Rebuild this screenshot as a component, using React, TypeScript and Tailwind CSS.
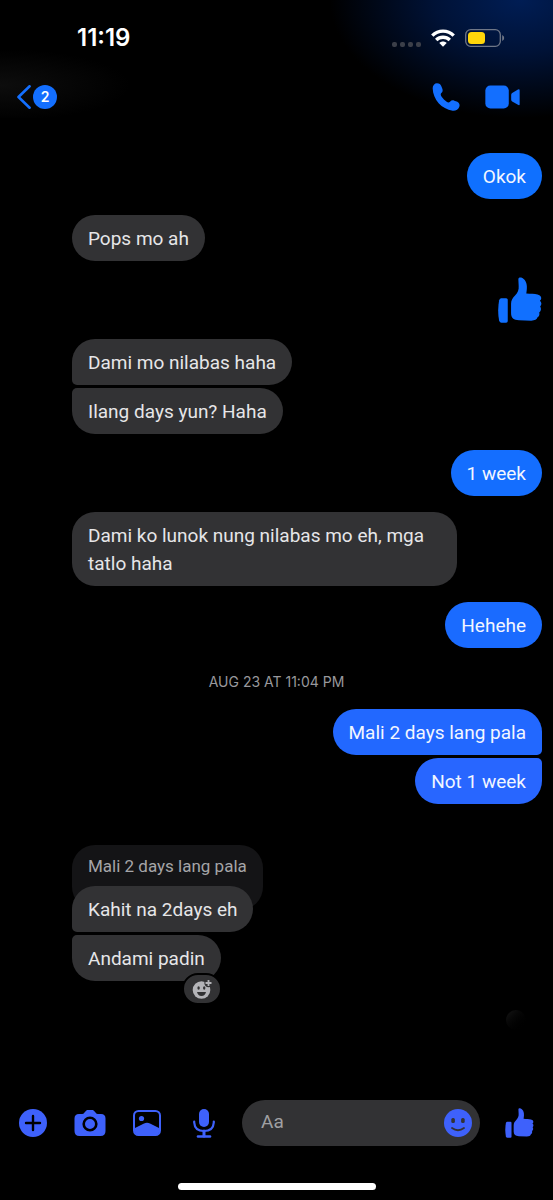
import React from "react";
import clsx from "clsx";

type IconProps = { className?: string };

const ThumbIcon = ({ className }: IconProps) => (
  <svg viewBox="172 411 132 139" fill="currentColor" className={className}>
    <path d="M181 475h15q5 0 5 5v64q0 5-5 5h-14q-5 0-7-6-3-16-3-31t3-31q2-6 6-6z" />
    <path d="M233 418C233 411 242 411 249 417C259 425 261 440 257 461C270 462 282 462 291 464C300 466 303 471 302 477Q301 481 298 483C304 487 304 495 299 500C303 506 302 514 296 518C298 524 296 530 291 533C289 540 283 543 272 543L235 542C219 541 211 535 211 520L211 492C211 480 216 475 223 467C231 458 235 450 234 438Z" />
  </svg>
);

const PhoneIcon = ({ className }: IconProps) => (
  <svg viewBox="186 250 84 84" fill="currentColor" className={className}>
    <path d="M188 266C188 257 194 251 201 251C208 251 212 254 214 260L217 267C219 273 218 276 214 280C211 283 212 287 215 291C219 297 224 302 230 306C234 309 237 309 240 306C244 302 248 301 253 303L262 306C268 309 270 315 268 321C265 329 257 334 248 333C215 329 189 300 188 266Z" />
  </svg>
);

const VideoIcon = ({ className }: IconProps) => (
  <svg viewBox="347 257 103 70" fill="currentColor" className={className}>
    <rect x="348" y="258" width="69" height="68" rx="15" />
    <path d="M424 286q0-4 3-6l17-10q5-3 5 3v40q0 5-5 2l-17-10q-3-2-3-6z" />
  </svg>
);

const WifiIcon = () => (
  <svg viewBox="0 0 24 18" fill="none" stroke="#fff" strokeWidth="3.4" className="h-[18px] w-6">
    <path d="M1.3 6.6C7.3.6 16.7.6 22.7 6.6" />
    <path d="M5.2 11C9 7.4 15 7.4 18.8 11" />
    <path d="M8.3 14C10.3 12 13.7 12 15.7 14L12 17.7Z" fill="#fff" stroke="none" />
  </svg>
);

const BatteryIcon = () => (
  <svg viewBox="0 0 40 18" className="h-[18px] w-10">
    <rect x=".7" y=".7" width="34.6" height="16.6" rx="5" fill="none" stroke="#6f7787" strokeWidth="1.3" />
    <rect x="3" y="3" width="17" height="12" rx="3.5" fill="#ffd60a" />
    <path d="M37.2 6v6q2-.8 2-3t-2-3z" fill="#6f7787" />
  </svg>
);

const PlusIcon = () => (
  <svg viewBox="0 0 28 28" className="size-7">
    <circle cx="14" cy="14" r="14" fill="currentColor" />
    <path d="M14 7v14M7 14h14" stroke="#000" strokeWidth="2.4" strokeLinecap="round" />
  </svg>
);

const CameraIcon = () => (
  <svg viewBox="0 0 32 26" className="h-[26px] w-8">
    <path
      d="M5 4h3q1.5 0 2.5-1.5T13 0h6q1.5 1 2.5 2.5T24 4h3q4.5 0 4.5 4.5v12.500q0 5-5 5h-21q-5 0-5-5V8.500Q.5 4 5 4z"
      fill="currentColor"
    />
    <circle cx="16" cy="14" r="6.3" fill="none" stroke="#000" strokeWidth="2.6" />
  </svg>
);

const PhotoIcon = () => (
  <svg viewBox="0 0 28 26" className="h-[26px] w-7">
    <rect x="1" y="1" width="26" height="24" rx="4.5" fill="none" stroke="currentColor" strokeWidth="2" />
    <circle cx="8.5" cy="8.5" r="2.6" fill="currentColor" />
    <path d="M2 18l9-4.500q3-1.500 6 0l9 4.500V22q0 3-3 3H5q-3 0-3-3z" fill="currentColor" />
  </svg>
);

const MicIcon = () => (
  <svg viewBox="0 0 22 29" fill="none" stroke="currentColor" strokeLinecap="round" className="h-[29px] w-[22px]">
    <rect x="6" y="0" width="10" height="18" rx="5" fill="currentColor" stroke="none" />
    <path d="M1.2 12.5v1Q1.7 22 11 22t9.8-8.5v-1" strokeWidth="2.2" />
    <path d="M11 22v5" strokeWidth="3" />
    <path d="M5 27.5h12" strokeWidth="2.6" />
  </svg>
);

const SmileIcon = () => (
  <svg viewBox="0 0 28 28" className="size-7">
    <circle cx="14" cy="14" r="14" fill="currentColor" />
    <rect x="7.3" y="9" width="3.6" height="5" rx="1.5" fill="#323234" />
    <rect x="17.1" y="9" width="3.6" height="5" rx="1.5" fill="#323234" />
    <path d="M8 19q6 4.500 12 0" fill="none" stroke="#323234" strokeWidth="1.8" strokeLinecap="round" />
  </svg>
);

const AddReactionIcon = () => (
  <svg viewBox="0 0 20 20" className="size-5">
    <circle cx="9.5" cy="11" r="8.8" fill="#b4b4b8" />
    <circle cx="16.5" cy="4" r="4.2" fill="#323234" />
    <path d="M16.5 1v6M13.5 4h6" stroke="#b4b4b8" strokeWidth="1.8" />
    <ellipse cx="6.6" cy="9" rx="1.2" ry="1.7" fill="#323234" />
    <ellipse cx="12.2" cy="9" rx="1.2" ry="1.7" fill="#323234" />
    <path d="M5 13h9q-1 4-4.500 4T5 13z" fill="#323234" />
  </svg>
);

interface BubbleProps {
  children: React.ReactNode;
  mine?: boolean;
  className?: string;
}

const Bubble = ({ children, mine = false, className }: BubbleProps) => (
  <div
    className={clsx(
      "relative w-fit max-w-[385px] rounded-[23px] px-4 pt-[10px] pb-2 font-['Roboto','Liberation_Sans',sans-serif] text-[19px] leading-7",
      mine ? "self-end text-[#f2f6ff]" : "ml-[61px] bg-[#323234] text-[#e6e6e8]",
      className
    )}
  >
    {children}
  </div>
);

const StatusBar = () => (
  <div className="flex h-[76px] items-center justify-between pr-12 pl-[77px]">
    <span className="text-2xl font-semibold text-white">11:19</span>
    <div className="flex items-center gap-[10px]">
      <div className="mt-3 flex gap-[3px]">
        <span className="size-[5px] rounded-[2px] bg-[#3b3f49]" />
        <span className="size-[5px] rounded-[2px] bg-[#3b3f49]" />
        <span className="size-[5px] rounded-[2px] bg-[#3b3f49]" />
        <span className="size-[5px] rounded-[2px] bg-[#3b3f49]" />
      </div>
      <WifiIcon />
      <BatteryIcon />
    </div>
  </div>
);

const ChatHeader = () => (
  <header className="flex h-[42px] items-center justify-between pr-[33px] pl-[17px] text-[#136fff]">
    <button type="button" aria-label="Back" className="flex items-center gap-[2px]">
      <svg viewBox="0 0 14 24" fill="none" stroke="currentColor" strokeWidth="2.6" strokeLinecap="round" strokeLinejoin="round" className="h-6 w-[14px]">
        <path d="M12.6 1.3L1.5 12l11.1 10.7" />
      </svg>
      <span className="flex size-6 items-center justify-center rounded-full bg-[#136fff] text-sm font-semibold text-white">
        2
      </span>
    </button>
    <div className="flex items-center gap-[25px]">
      <button type="button" aria-label="Call">
        <PhoneIcon className="size-7" />
      </button>
      <button type="button" aria-label="Video call">
        <VideoIcon className="h-6 w-[35px]" />
      </button>
    </div>
  </header>
);

const Composer = () => (
  <form className="flex items-center gap-[22px] px-[17px] text-[#3e61fb]">
    <div className="flex gap-[25px]">
      <button type="button" aria-label="More" className="flex h-8 w-8 items-center justify-center">
        <PlusIcon />
      </button>
      <button type="button" aria-label="Camera" className="flex h-8 w-8 items-center justify-center">
        <CameraIcon />
      </button>
      <button type="button" aria-label="Photos" className="flex h-8 w-8 items-center justify-center">
        <PhotoIcon />
      </button>
      <button type="button" aria-label="Voice message" className="flex h-8 w-8 items-center justify-center">
        <MicIcon />
      </button>
    </div>
    <div className="flex h-[46px] min-w-0 flex-1 items-center rounded-full bg-[#323234] pr-2 pl-[19px]">
      <input
        type="text"
        aria-label="Message"
        placeholder="Aa"
        className="min-w-0 flex-1 bg-transparent pb-[2px] font-['Roboto','Liberation_Sans',sans-serif] text-[19px] text-white outline-none placeholder:text-[#a0a0a2]"
      />
      <button type="button" aria-label="Emoji">
        <SmileIcon />
      </button>
    </div>
    <button type="button" aria-label="Send like" className="flex w-[34px] justify-center">
      <ThumbIcon className="h-[30px] w-[29px]" />
    </button>
  </form>
);

export default function App() {
  return (
    <div className="flex min-h-screen flex-col bg-black font-['Inter','Liberation_Sans',sans-serif]">
      <div className="bg-[radial-gradient(ellipse_190px_118px_at_94%_0%,#001d54,#001236_45%,transparent),radial-gradient(ellipse_130px_36px_at_0%_72%,#0d0d0d,transparent)]">
        <StatusBar />
        <ChatHeader />
      </div>

      <main className="flex flex-col px-[11px] pt-[35px]">
        <Bubble mine className="bg-[#0f70ff]">Okok</Bubble>
        <Bubble className="mt-4">Pops mo ah</Bubble>
        <ThumbIcon className="mt-4 h-[46px] w-11 self-end text-[#1170ff]" />
        <Bubble className="mt-4 rounded-bl-[5px]">Dami mo nilabas haha</Bubble>
        <Bubble className="mt-[3px] rounded-tl-[5px]">Ilang days yun? Haha</Bubble>
        <Bubble mine className="mt-4 bg-[#146eff]">1 week</Bubble>
        <Bubble className="mt-4">Dami ko lunok nung nilabas mo eh, mga tatlo haha</Bubble>
        <Bubble mine className="mt-4 bg-[#1a6bff]">Hehehe</Bubble>
        <time className="mt-[23px] mb-[17px] self-center text-sm leading-[21px] text-[#98989c]">
          AUG 23 AT 11:04 PM
        </time>
        <Bubble mine className="rounded-br-[5px] bg-[#2268ff]">Mali 2 days lang pala</Bubble>
        <Bubble mine className="mt-[3px] rounded-tr-[5px] bg-[#2866ff]">Not 1 week</Bubble>

        <div className="mt-[41px] ml-[61px] h-[65px] w-fit rounded-[23px] bg-[#141416] px-4 pt-[7px] font-['Roboto','Liberation_Sans',sans-serif] text-[17px] leading-7 text-[#a5a5a8]">
          Mali 2 days lang pala
        </div>
        <Bubble className="-mt-6 rounded-bl-[5px]">Kahit na 2days eh</Bubble>
        <Bubble className="mt-[3px] rounded-tl-[5px]">
          Andami padin
          <button
            type="button"
            aria-label="Add reaction"
            className="absolute -right-px -bottom-6 flex h-8 w-10 items-center justify-center rounded-full border-2 border-black bg-[#323234]"
          >
            <AddReactionIcon />
          </button>
        </Bubble>
        <div className="mt-[29px] mr-4 size-5 self-end rounded-full bg-linear-to-br from-[#161616] to-black" />
      </main>

      <footer className="mt-auto pb-[10px]">
        <Composer />
        <div className="mx-auto mt-[37px] h-[7px] w-[198px] rounded-full bg-white" />
      </footer>
    </div>
  );
}
